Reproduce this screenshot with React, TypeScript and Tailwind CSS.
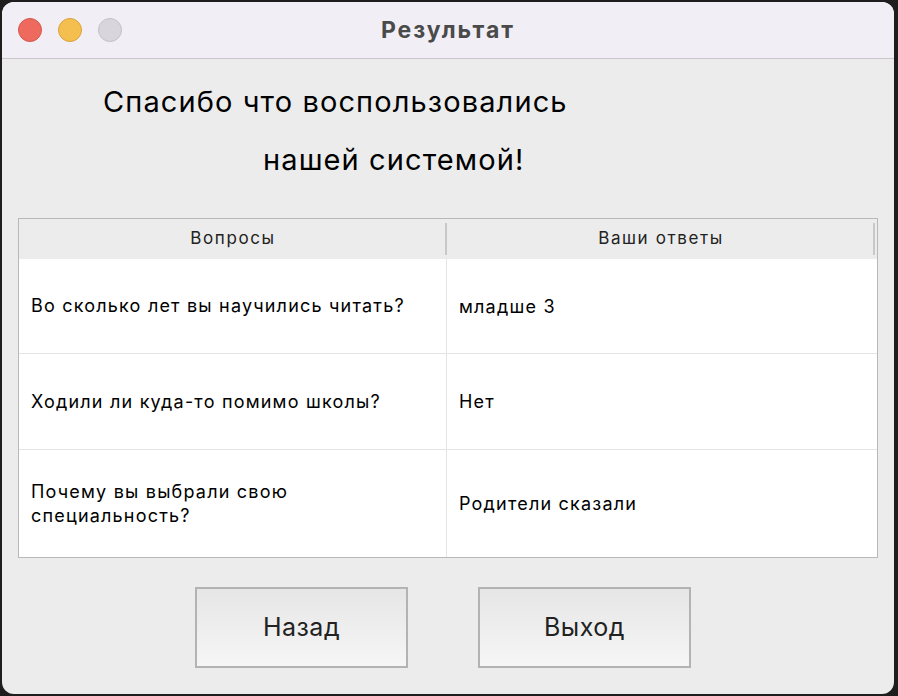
const rows = [
  { q: "Во сколько лет вы научились читать?", a: "младше 3", h: "h-[95px]" },
  { q: "Ходили ли куда-то помимо школы?", a: "Нет", h: "h-[96px]" },
  { q: "Почему вы выбрали свою специальность?", a: "Родители сказали", h: "h-[107px]" },
];

function Light({ color, ring }: { color: string; ring: string }) {
  return <div className={`w-[24px] h-[24px] rounded-full border ${color} ${ring}`} />;
}

export default function App() {
  return (
    <div
      className="w-[898px] h-[696px] bg-[#1e1e1e] pt-[2px] pl-[2px] overflow-hidden"
      style={{ fontFamily: 'Inter, "Liberation Sans", Arial, sans-serif' }}
    >
      <div className="w-[892px] h-[692px] rounded-[12px] overflow-hidden bg-[#ececec] flex flex-col">
        {/* title bar */}
        <div className="relative h-[57px] bg-[#f1eff5] border-b border-[#c9c7cc] flex items-center pl-[16px] gap-[16px] shrink-0">
          <Light color="bg-[#ee6a5f]" ring="border-[#d5564c]" />
          <Light color="bg-[#f5bf4f]" ring="border-[#d9a33c]" />
          <Light color="bg-[#d8d6dc]" ring="border-[#c3c1c6]" />
          <div className="absolute inset-0 flex items-center justify-center text-[23px] font-bold tracking-[2px] text-[#4a4a4a] pointer-events-none">
            Результат
          </div>
        </div>

        {/* heading */}
        <div className="text-[29px] tracking-[1.1px] text-black leading-none">
          <div className="pl-[101px] pt-[28px]">Спасибо что воспользовались</div>
          <div className="pl-[261px] pt-[29px]">нашей системой!</div>
        </div>

        {/* table */}
        <div className="mt-[44px] ml-[16px] w-[860px] border border-[#b8b8b8] bg-white">
          <div className="h-[40px] bg-[#ececec] flex text-[17px] tracking-[1.6px] text-[#222]">
            <div className="w-[428px] flex items-center justify-center relative">
              Вопросы
              <div className="absolute right-0 top-[4px] bottom-[4px] w-[2px] bg-[#c8c8c8]" />
            </div>
            <div className="w-[428px] flex items-center justify-center relative">
              Ваши ответы
              <div className="absolute right-0 top-[4px] bottom-[4px] w-[2px] bg-[#c8c8c8]" />
            </div>
          </div>
          {rows.map((r, i) => (
            <div
              key={i}
              className={`flex ${r.h} text-[18px] tracking-[1.2px] text-black ${i < rows.length - 1 ? "border-b border-[#e4e4e4]" : ""}`}
            >
              <div className="w-[428px] border-r border-[#e4e4e4] flex items-center pl-[12px] pr-[30px] leading-[24px]">
                {r.q}
              </div>
              <div className="flex-1 flex items-center pl-[12px]">{r.a}</div>
            </div>
          ))}
        </div>

        {/* buttons */}
        <div className="mt-[29px] flex pl-[193px] gap-[70px]">
          {["Назад", "Выход"].map((t) => (
            <div
              key={t}
              className="w-[213px] h-[81px] border-2 border-[#b3b3b3] bg-gradient-to-b from-[#e6e6e6] to-[#f6f6f6] flex items-center justify-center text-[25px] tracking-[0.5px] text-[#222]"
            >
              {t}
            </div>
          ))}
        </div>
      </div>
    </div>
  );
}
